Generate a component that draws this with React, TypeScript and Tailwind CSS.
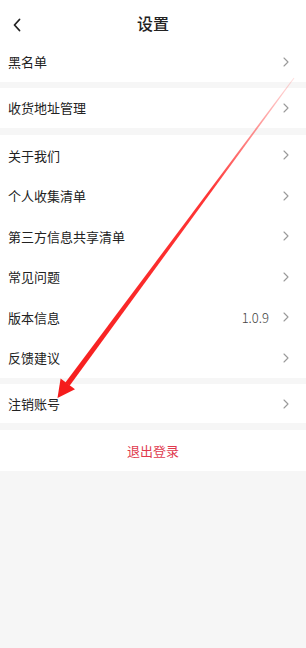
import React from 'react';

const font = { fontFamily: '"Noto Sans CJK SC", "Noto Sans", sans-serif' };

const Chevron = () => (
  <svg width="6" height="10" viewBox="0 0 6 10" className="shrink-0">
    <polyline points="1,1 5,5 1,9" fill="none" stroke="#9a9a9a" strokeWidth="1.1" strokeLinecap="round" strokeLinejoin="round" />
  </svg>
);

const Row = ({ label, value, h = 'h-[40px]' }: { label: string; value?: string; h?: string }) => (
  <div className={`flex ${h} items-center bg-white pl-2 pr-[17px]`}>
    <span className="flex-1 text-[13px] text-[#222]">{label}</span>
    {value && <span className="mr-[14px] text-[13px] font-light text-[#444]">{value}</span>}
    <Chevron />
  </div>
);

const Gap = ({ h = 'h-[6px]' }: { h?: string }) => <div className={`${h} bg-[#f6f6f6]`} />;

export default function App() {
  return (
    <div className="relative min-h-[648px] w-[306px] overflow-hidden bg-[#f6f6f6]" style={font}>
      <div className="relative flex h-[42px] items-center justify-center bg-white">
        <svg width="10" height="14" viewBox="0 0 10 14" className="absolute left-[12px] top-[18px]">
          <polyline points="7.5,1.5 2.5,7 7.5,12.5" fill="none" stroke="#222" strokeWidth="1.8" strokeLinecap="round" strokeLinejoin="round" />
        </svg>
        <span className="mt-[4px] text-[16px] font-medium text-[#222]">设置</span>
      </div>
      <Row label="黑名单" />
      <Gap />
      <Row label="收货地址管理" />
      <Gap h="h-[7px]" />
      <div className="flex flex-col">
        <Row h="h-[40.5px]" label="关于我们" />
        <Row h="h-[40.5px]" label="个人收集清单" />
        <Row h="h-[40.5px]" label="第三方信息共享清单" />
        <Row h="h-[40.5px]" label="常见问题" />
        <Row h="h-[40.5px]" label="版本信息" value="1.0.9" />
        <Row h="h-[40.5px]" label="反馈建议" />
      </div>
      <Gap h="h-[6px]" />
      <Row h="h-[39px]" label="注销账号" />
      <Gap h="h-[7px]" />
      <div className="flex h-[41px] items-center justify-center bg-white">
        <span className="text-[13px] text-[#e03a4e]">退出登录</span>
      </div>

      <svg className="pointer-events-none absolute left-0 top-0" width="306" height="648" viewBox="0 0 306 648">
        <defs>
          <linearGradient id="arr" x1="294" y1="78" x2="58" y2="397" gradientUnits="userSpaceOnUse">
            <stop offset="0" stopColor="#ff2a2a" stopOpacity="0.15" />
            <stop offset="0.35" stopColor="#ff2020" stopOpacity="0.9" />
            <stop offset="1" stopColor="#f51c1c" />
          </linearGradient>
        </defs>
        <polygon points="294.4,78.3 293.6,77.7 65.4,382.6 69.6,385.8" fill="url(#arr)" />
        <polygon points="57.5,398 60.6,378.6 75,389.2" fill="#f51c1c" />
      </svg>
    </div>
  );
}
